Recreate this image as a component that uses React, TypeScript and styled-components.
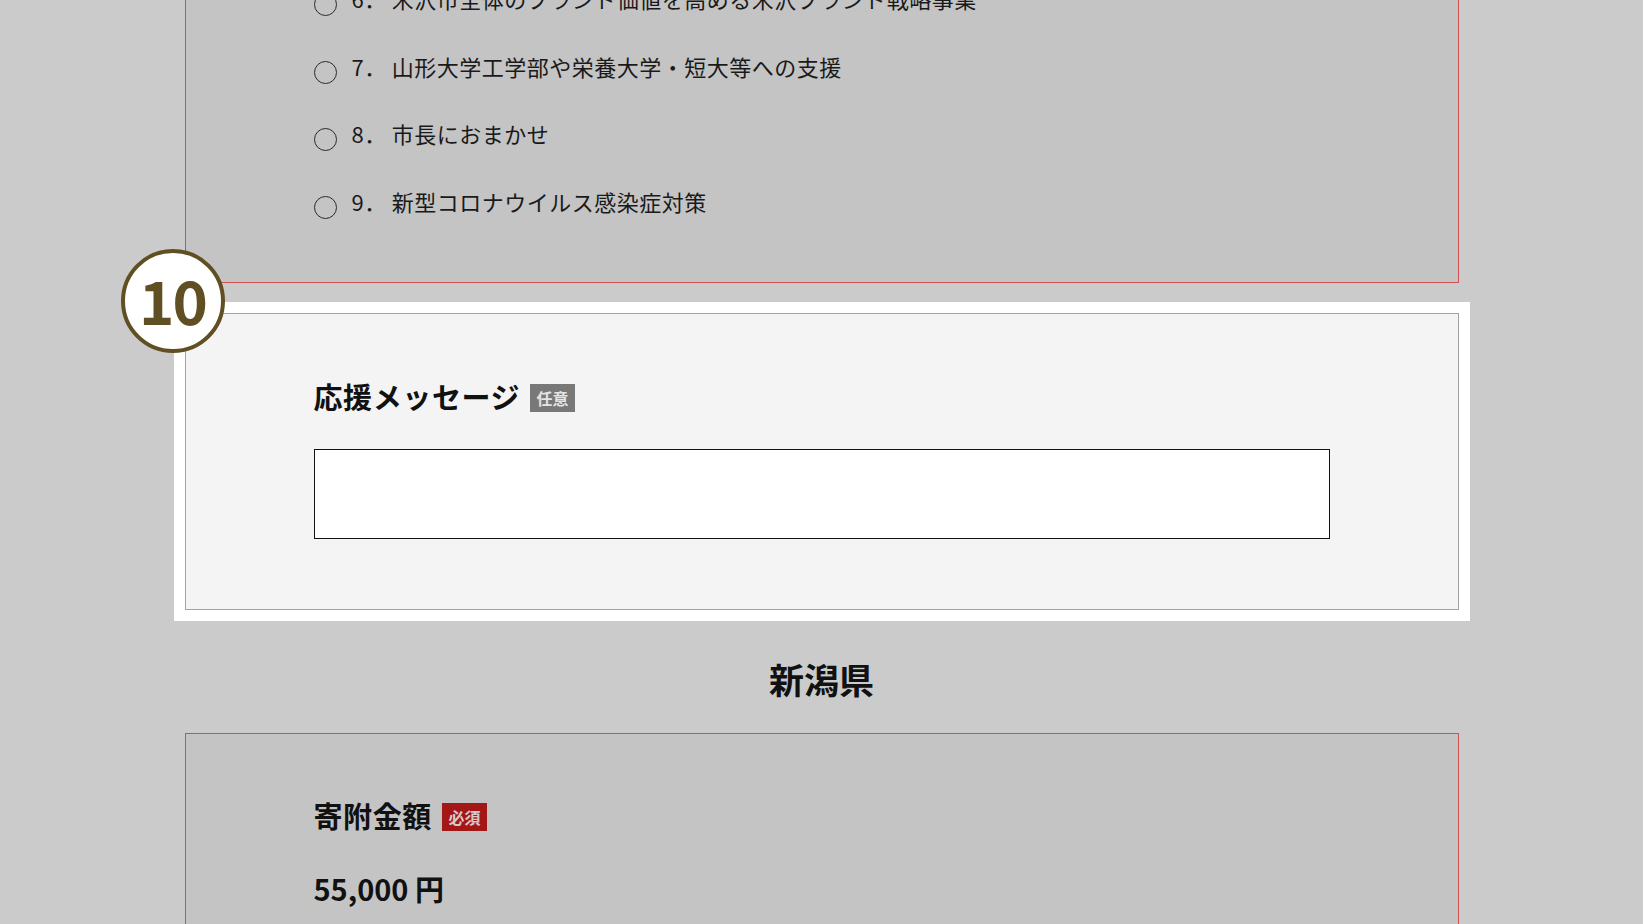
import React from "react";
import styled, { createGlobalStyle } from "styled-components";

const GlobalStyle = createGlobalStyle`
  html, body {
    margin: 0;
    padding: 0;
    overflow: hidden;
    background: #cbcbcb;
  }
  body {
    font-family: "Noto Sans CJK JP", "Noto Sans", sans-serif;
    color: #111;
  }
`;

const Page = styled.div`
  width: 1274px;
  margin: 0 auto;
`;

const DimPanel = styled.section<{ $pull?: number }>`
  background: #c4c4c4;
  border: 1px solid #cf5050;
  margin-top: ${(p) => (p.$pull ? `-${p.$pull}px` : "0")};
  padding: ${(p) => (p.$pull ? "60px 128px 66px" : "61px 128px 80px")};
`;

const RadioList = styled.ul`
  list-style: none;
  margin: 0;
  padding: 0;
  display: flex;
  flex-direction: column;
  gap: 37.6px;
`;

const RadioRow = styled.li`
  display: flex;
  align-items: center;
  height: 30px;
`;

const RadioCircle = styled.span`
  display: inline-block;
  width: 23px;
  height: 23px;
  box-sizing: border-box;
  border: 1.6px solid #2a2a2a;
  border-radius: 50%;
  margin-right: 15px;
  margin-top: 13px;
  flex: none;
`;

const RadioNumber = styled.span`
  font-size: 22px;
  letter-spacing: 0.5px;
  color: #1a1a1a;
  margin-right: 5px;
`;

const RadioLabel = styled.span`
  font-size: 22px;
  letter-spacing: 0.5px;
  color: #1a1a1a;
  white-space: nowrap;
`;

const ActiveFrame = styled.div`
  position: relative;
  background: #fff;
  padding: 11px;
  margin: 19px -11px 0;
`;

const StepBadge = styled.div`
  position: absolute;
  top: -53px;
  left: -53px;
  width: 104px;
  height: 104px;
  box-sizing: border-box;
  border: 4px solid #5f4f22;
  border-radius: 50%;
  background: #fff;
  display: flex;
  align-items: center;
  justify-content: center;
  color: #5f4f22;
  font-size: 60px;
  font-weight: 700;
  line-height: 1;
  padding-bottom: 4px;
  letter-spacing: -2px;
`;

const ActivePanel = styled.div`
  background: #f4f4f4;
  border: 1px solid #a3a3a3;
  padding: 62px 128px 70px;
`;

const FieldHead = styled.div`
  display: flex;
  align-items: center;
  gap: 10px;
`;

const FieldLabel = styled.h3`
  margin: 0;
  font-size: 29px;
  font-weight: 700;
  line-height: 1.4;
  letter-spacing: 0.6px;
  color: #111;
`;

const Tag = styled.span<{ $required?: boolean }>`
  display: inline-flex;
  align-items: center;
  justify-content: center;
  width: 45px;
  height: 28px;
  margin-top: 3px;
  font-size: 16px;
  font-weight: 700;
  background: ${(p) => (p.$required ? "#a31717" : "#787878")};
  color: ${(p) => (p.$required ? "#d8c8c8" : "#e4e4e4")};
`;

const MessageBox = styled.textarea`
  display: block;
  margin-top: 33px;
  width: 100%;
  height: 90px;
  box-sizing: border-box;
  border: 1.5px solid #111;
  background: #fff;
  resize: none;
  outline: none;
  font-family: inherit;
  font-size: 18px;
`;

const PrefTitle = styled.h2`
  margin: 34px 0 30px;
  text-align: center;
  font-size: 35px;
  font-weight: 700;
  line-height: 1.36;
  color: #111;
`;

const Amount = styled.div`
  margin-top: 32px;
  font-size: 29px;
  font-weight: 700;
  line-height: 1.4;
  color: #111;
`;

const items = [
  { n: "6", t: "米沢市全体のブランド価値を高める米沢ブランド戦略事業" },
  { n: "7", t: "山形大学工学部や栄養大学・短大等への支援" },
  { n: "8", t: "市長におまかせ" },
  { n: "9", t: "新型コロナウイルス感染症対策" },
];

export default function App() {
  return (
    <>
      <GlobalStyle />
      <Page>
        <DimPanel $pull={78}>
          <RadioList>
            {items.map((it) => (
              <RadioRow key={it.n}>
                <RadioCircle />
                <RadioNumber>{it.n}．</RadioNumber>
                <RadioLabel>{it.t}</RadioLabel>
              </RadioRow>
            ))}
          </RadioList>
        </DimPanel>

        <ActiveFrame>
          <StepBadge>10</StepBadge>
          <ActivePanel>
            <FieldHead>
              <FieldLabel>応援メッセージ</FieldLabel>
              <Tag>任意</Tag>
            </FieldHead>
            <MessageBox />
          </ActivePanel>
        </ActiveFrame>

        <PrefTitle>新潟県</PrefTitle>

        <DimPanel>
          <FieldHead>
            <FieldLabel>寄附金額</FieldLabel>
            <Tag $required>必須</Tag>
          </FieldHead>
          <Amount>55,000 円</Amount>
        </DimPanel>
      </Page>
    </>
  );
}
